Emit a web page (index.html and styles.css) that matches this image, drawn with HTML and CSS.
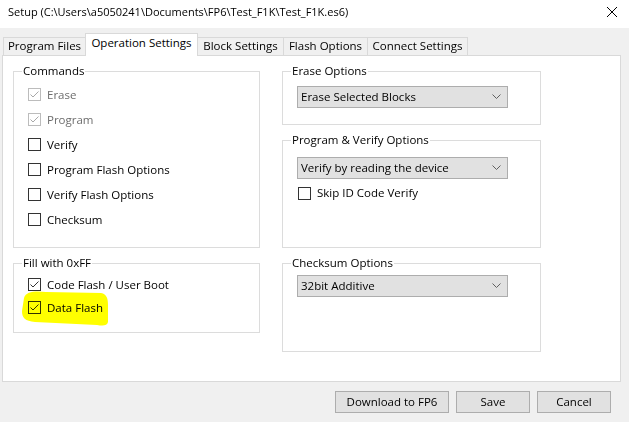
FILE: index.html
```html
<!DOCTYPE html>
<html>
<head>
<meta charset="utf-8">
<title>Setup</title>
<link rel="stylesheet" href="styles.css">
</head>
<body>
<div class="window">
  <div class="titlebar">
    <span class="title">Setup (C:\Users\a5050241\Documents\FP6\Test_F1K\Test_F1K.es6)</span>
    <svg class="close" width="12" height="12" viewBox="0 0 12 12"><path d="M1 1 L11 11 M11 1 L1 11" stroke="#000" stroke-width="1" fill="none"/></svg>
  </div>
  <div class="tabs">
    <div class="tab t1">Program Files</div>
    <div class="tab t2 active">Operation Settings</div>
    <div class="tab t3">Block Settings</div>
    <div class="tab t4">Flash Options</div>
    <div class="tab t5">Connect Settings</div>
  </div>
  <div class="panel">
    <div class="col col-left">
      <fieldset class="group commands">
        <legend>Commands</legend>
        <div class="rows rows25">
          <div class="cb disabled"><span class="box checked"><svg viewBox="0 0 11 11"><path d="M1.5 5.5 L4 8 L9.5 2.5" /></svg></span>Erase</div>
          <div class="cb disabled"><span class="box checked"><svg viewBox="0 0 11 11"><path d="M1.5 5.5 L4 8 L9.5 2.5" /></svg></span>Program</div>
          <div class="cb"><span class="box"></span>Verify</div>
          <div class="cb"><span class="box"></span>Program Flash Options</div>
          <div class="cb"><span class="box"></span>Verify Flash Options</div>
          <div class="cb"><span class="box"></span>Checksum</div>
        </div>
      </fieldset>
      <fieldset class="group fill">
        <legend>Fill with 0xFF</legend>
        <div class="rows rows23">
          <div class="cb"><span class="box checked"><svg viewBox="0 0 11 11"><path d="M1.5 5.5 L4 8 L9.5 2.5" /></svg></span>Code Flash / User Boot</div>
          <div class="cb marked"><span class="box checked"><svg viewBox="0 0 11 11"><path d="M1.5 5.5 L4 8 L9.5 2.5" /></svg></span>Data Flash
            <svg class="highlight" width="90" height="38" viewBox="0 0 90 38"><path d="M3 9 C5 2 15 2 25 3 L80 4 C86 5 87 10 87 16 L87 33 C86 37 82 37 76 36 L14 33 C4 32 1 29 1 22 Z" fill="#ffff00"/></svg>
          </div>
        </div>
      </fieldset>
    </div>
    <div class="col col-right">
      <fieldset class="group erase">
        <legend>Erase Options</legend>
        <div class="select">Erase Selected Blocks<svg class="chev" width="9" height="5" viewBox="0 0 9 5"><path d="M0.5 0.5 L4.5 4.5 L8.5 0.5"/></svg></div>
      </fieldset>
      <fieldset class="group pv">
        <legend>Program &amp; Verify Options</legend>
        <div class="select">Verify by reading the device<svg class="chev" width="9" height="5" viewBox="0 0 9 5"><path d="M0.5 0.5 L4.5 4.5 L8.5 0.5"/></svg></div>
        <div class="cb skip"><span class="box"></span>Skip ID Code Verify</div>
      </fieldset>
      <fieldset class="group csum">
        <legend>Checksum Options</legend>
        <div class="select">32bit Additive<svg class="chev" width="9" height="5" viewBox="0 0 9 5"><path d="M0.5 0.5 L4.5 4.5 L8.5 0.5"/></svg></div>
      </fieldset>
    </div>
  </div>
  <div class="buttons">
    <div class="btn btn-wide">Download to FP6</div>
    <div class="btn">Save</div>
    <div class="btn">Cancel</div>
  </div>
</div>
</body>
</html>
```

FILE: styles.css
```css
* { box-sizing: border-box; }
html, body {
  margin: 0;
  padding: 0;
}
body {
  width: 629px;
  height: 422px;
  background: #f0f0f0;
  font-family: "Open Sans", "Noto Sans", "Liberation Sans", sans-serif;
  font-size: 11.5px;
  color: #000;
  overflow: hidden;
}
.window {
  width: 629px;
  height: 422px;
  display: flex;
  flex-direction: column;
}
.titlebar {
  height: 28px;
  background: #fff;
  display: flex;
  align-items: center;
  justify-content: space-between;
  padding: 0 11px 4px 8px;
}
.title {
  font-size: 11px;
  line-height: 16px;
}
.close path { shape-rendering: crispEdges; }
.tabs {
  height: 27px;
  display: flex;
  align-items: flex-end;
  padding-left: 3px;
}
.tab {
  height: 18px;
  border: 1px solid #d9d9d9;
  border-bottom: none;
  background: #f0f0f0;
  display: flex;
  align-items: center;
  justify-content: center;
  line-height: 16px;
  padding-bottom: 1px;
  white-space: nowrap;
}
.tab + .tab { margin-left: -1px; }
.tab.active {
  height: 23px;
  background: #fff;
  margin-bottom: -1px;
  position: relative;
  z-index: 1;
  padding-bottom: 4px;
}
.t1 { width: 83px; }
.t2 { width: 113px; }
.t3 { width: 87px; }
.t4 { width: 85px; }
.t5 { width: 101px; }
.panel {
  margin-left: 2px;
  width: 619px;
  height: 327px;
  background: #fff;
  border: 1px solid #d9d9d9;
  display: flex;
  gap: 22px;
  padding: 7px 0 0 10px;
}
.col {
  display: flex;
  flex-direction: column;
  gap: 7px;
}
.col-left { width: 247px; }
.col-right { width: 259px; }
.group {
  margin: 0;
  border: 1px solid #dcdcdc;
  padding: 0 0 0 8px;
  min-width: 0;
}
.group legend {
  padding: 0 1px;
  line-height: 16px;
  font-size: 11.5px;
}
.rows {
  margin-left: 6px;
  margin-top: 3px;
}
.commands { padding-bottom: 15px; }
.fill { padding-bottom: 12px; }
.rows23 { margin-top: 2px; }
.fill { padding-bottom: 13px; }
.rows25 .cb { height: 25px; }
.rows23 .cb { height: 23px; }
.cb {
  display: flex;
  align-items: center;
  gap: 6px;
  line-height: 16px;
  white-space: nowrap;
}
.cb.disabled { color: #6d6d6d; }
.box {
  width: 13px;
  height: 13px;
  border: 1px solid #333;
  background: #fff;
  flex: none;
  display: flex;
  align-items: center;
  justify-content: center;
}
.box svg {
  width: 11px;
  height: 11px;
  fill: none;
  stroke: #333;
  stroke-width: 1;
}
.disabled .box { border-color: #bcbcbc; }
.disabled .box svg { stroke: #a8a8a8; }
.marked { position: relative; }
.highlight {
  position: absolute;
  left: -7px;
  top: -7px;
  mix-blend-mode: multiply;
  pointer-events: none;
}
.select {
  width: 211px;
  height: 22px;
  margin-left: 6px;
  background: #e1e1e1;
  border: 1px solid #adadad;
  display: flex;
  align-items: center;
  justify-content: space-between;
  padding: 0 6px 1px 3px;
  line-height: 16px;
  white-space: nowrap;
}
.chev {
  fill: none;
  stroke: #606060;
  stroke-width: 1;
}
.erase { padding-bottom: 16px; }
.erase .select { margin-top: 7px; }
.pv { padding-bottom: 44px; }
.pv .select { margin-top: 9px; }
.skip {
  margin-top: 4px;
  margin-left: 7px;
  height: 20px;
}
.csum { padding-bottom: 54px; }
.csum .select { margin-top: 4px; }
.buttons {
  margin-top: 9px;
  display: flex;
  justify-content: flex-end;
  gap: 7px;
  padding-right: 18px;
}
.btn {
  width: 74px;
  height: 22px;
  background: #e1e1e1;
  border: 1px solid #adadad;
  display: flex;
  align-items: center;
  justify-content: center;
  line-height: 16px;
  padding-bottom: 1px;
}
.btn-wide { width: 114px; }
```
